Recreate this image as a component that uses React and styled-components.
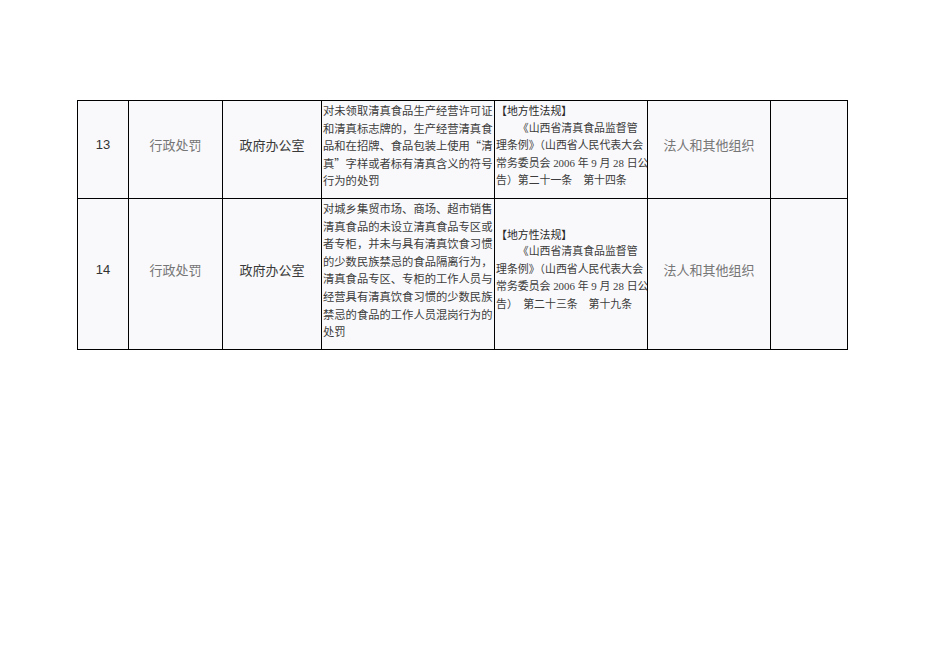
import React from "react";
import styled, { createGlobalStyle } from "styled-components";

const GlobalStyle = createGlobalStyle`
  html, body {
    margin: 0;
    padding: 0;
    background: #ffffff;
  }
`;

const rows = [
  {
    no: "13",
    type: "行政处罚",
    dept: "政府办公室",
    height: 98,
    desc: [
      "对未领取清真食品生产经营许可证",
      "和清真标志牌的，生产经营清真食",
      "品和在招牌、食品包装上使用“清",
      "真”字样或者标有清真含义的符号",
      "行为的处罚",
    ],
    basisAlign: "top",
    basis: [
      "理条例》（山西省人民代表大会",
      "常务委员会 2006 年 9 月 28 日公",
      "告）第二十一条　第十四条",
    ],
    target: "法人和其他组织",
  },
  {
    no: "14",
    type: "行政处罚",
    dept: "政府办公室",
    height: 151,
    desc: [
      "对城乡集贸市场、商场、超市销售",
      "清真食品的未设立清真食品专区或",
      "者专柜，并未与具有清真饮食习惯",
      "的少数民族禁忌的食品隔离行为，",
      "清真食品专区、专柜的工作人员与",
      "经营具有清真饮食习惯的少数民族",
      "禁忌的食品的工作人员混岗行为的",
      "处罚",
    ],
    basisAlign: "middle",
    basis: [
      "理条例》（山西省人民代表大会",
      "常务委员会 2006 年 9 月 28 日公",
      "告）　第二十三条　第十九条",
    ],
    target: "法人和其他组织",
  },
];

const Page = styled.div`
  padding: 100px 0 0 77px;
`;

const Table = styled.table`
  border-collapse: collapse;
  table-layout: fixed;
  width: 771px;
`;

const Row = styled.tr`
  height: ${(p) => p.h}px;
`;

const Cell = styled.td`
  border: 1px solid #000;
  background: #f9f9fb;
  padding: 0 0 10px 0;
  vertical-align: middle;
  text-align: center;
  overflow: hidden;
  font-family: "Noto Sans CJK SC", sans-serif;
  font-size: 13px;
  color: ${(p) => p.color || "#3a3a3a"};
`;

const NumCell = styled(Cell)`
  font-family: "Liberation Sans", Arial, sans-serif;
  font-size: 13px;
  color: #333;
`;

const TextCell = styled.td`
  border: 1px solid #000;
  background: #f9f9fb;
  padding: ${(p) => (p.valign === "middle" ? "0 0 9px 1px" : "1px 0 0 1px")};
  vertical-align: ${(p) => p.valign || "top"};
  text-align: left;
  overflow: hidden;
  font-family: ${(p) =>
    p.serifDigits
      ? `"Liberation Serif", "Noto Sans CJK SC", serif`
      : `"Noto Sans CJK SC", sans-serif`};
  font-size: ${(p) => p.size}px;
  line-height: 17.6px;
  color: #3c3c3c;
`;

const Line = styled.div`
  white-space: nowrap;
  text-indent: ${(p) => (p.indent ? "2em" : "0")};
`;

const Heading = styled.div`
  white-space: nowrap;
  font-family: "Noto Sans CJK SC", sans-serif;
  color: #2a2a2a;
`;

const widths = [51, 94, 99, 173, 153, 123, 77];

export default function App() {
  return (
    <>
      <GlobalStyle />
      <Page>
        <Table>
          <colgroup>
            {widths.map((w, i) => (
              <col key={i} style={{ width: w }} />
            ))}
          </colgroup>
          <tbody>
            {rows.map((r) => (
              <Row key={r.no} h={r.height}>
                <NumCell>{r.no}</NumCell>
                <Cell color="#767676">{r.type}</Cell>
                <Cell>{r.dept}</Cell>
                <TextCell size={11.3}>
                  {r.desc.map((l, i) => (
                    <Line key={i}>{l}</Line>
                  ))}
                </TextCell>
                <TextCell size={10.9} valign={r.basisAlign} serifDigits>
                  <Heading>【地方性法规】</Heading>
                  <Line indent>《山西省清真食品监督管</Line>
                  {r.basis.map((l, i) => (
                    <Line key={i}>{l}</Line>
                  ))}
                </TextCell>
                <Cell color="#767676">{r.target}</Cell>
                <Cell />
              </Row>
            ))}
          </tbody>
        </Table>
      </Page>
    </>
  );
}
